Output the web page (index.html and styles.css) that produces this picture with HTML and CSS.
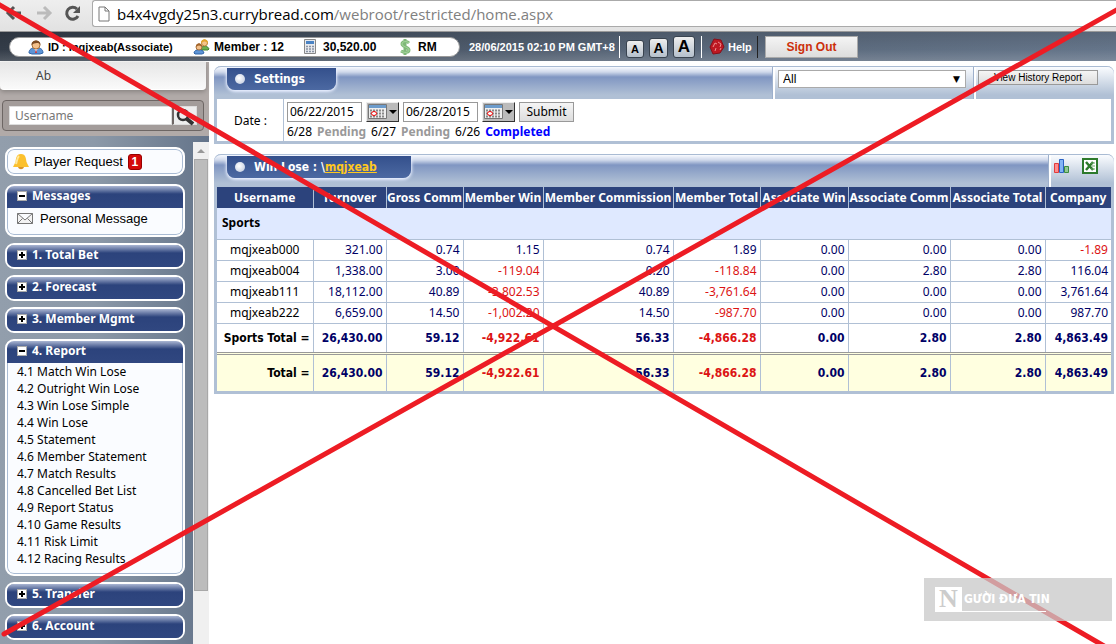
FILE: index.html
```html
<!DOCTYPE html>
<html lang="en">
<head>
<meta charset="utf-8">
<title>Win Lose</title>
<link rel="stylesheet" href="styles.css">
</head>
<body>
<div class="page">
  <div class="browser">
    <svg class="nav-icons" width="92" height="28" viewBox="0 0 92 28" fill="none">
      <path d="M21 13H8M14 7l-6 6 6 6" stroke="#555" stroke-width="3"/>
      <path d="M37 13h13M44 7l6 6-6 6" stroke="#bbb" stroke-width="3"/>
      <path d="M77 9a6 6 0 1 0 1 7" stroke="#555" stroke-width="3"/>
      <path d="M80 6v7h-7z" fill="#555"/>
    </svg>
    <div class="address">
      <svg width="12" height="16" viewBox="0 0 12 16"><path d="M1 1h6l4 4v10H1zM7 1v4h4" fill="#fff" stroke="#777"/></svg>
      <span>b4x4vgdy25n3.currybread.com<span class="path">/webroot/restricted/home.aspx</span></span>
    </div>
  </div>

  <header class="topbar">
    <div class="account">
      <span class="fact id">
        <svg width="16" height="16" viewBox="0 0 16 16"><path d="M1 14c0-4 3-5 5-5h4c2 0 5 1 5 5l-3 1H4z" fill="#5d94d6" stroke="#2f64a8"/><path d="M6 9l2 4 2-4z" fill="#fff"/><path d="M8 10l-1 4h2z" fill="#d33"/><circle cx="8" cy="6" r="4" fill="#f3c08a" stroke="#a8703a"/><path d="M3.500 6C3 0 13 0 12.500 6 11 3 6 4 3.500 6z" fill="#7a4a22"/></svg>
        ID : mqjxeab(Associate)</span>
      <span class="fact member">
        <svg width="17" height="16" viewBox="0 0 17 16"><path d="M8 9c0-2 7-3 8 1l-1 1H8z" fill="#6bb04c" stroke="#3f8130"/><circle cx="11.500" cy="4" r="3" fill="#f5c58b" stroke="#b98634"/><path d="M8 4c0-5 7-5 7 0-2-2-4-2-7 0z" fill="#e3a62c"/><path d="M1 14c0-4 9-5 10 0l-2 1H2z" fill="#5d94d6" stroke="#2f64a8"/><circle cx="6" cy="8" r="3" fill="#f3c08a" stroke="#a8703a"/><path d="M3 8c0-5 6-5 6 0-2-2-4-2-6 0z" fill="#a3662c"/></svg>
        Member : 12</span>
      <span class="fact credit">
        <svg width="12" height="15" viewBox="0 0 12 15"><path d="M.5.5h11v14H.5z" fill="#e8eaee" stroke="#888"/><path d="M2 2h8v3H2z" fill="#4a83c4"/><path d="M2 7.500h8M2 10h8M2 12.500h8" stroke="#8993a4" stroke-width="1.500" stroke-dasharray="2 1"/></svg>
        30,520.00</span>
      <span class="fact currency">
        <svg width="12" height="16" viewBox="0 0 12 16" fill="none"><path d="M10 4C8 2 3 2 3 5s7 3 7 6-5 3-8 1M6 0v16" stroke="#7fb878" stroke-width="3"/><path d="M10 4C8 2 3 2 3 5s7 3 7 6-5 3-8 1" stroke="#a9d8a0"/></svg>
        RM</span>
    </div>
    <time class="clock">28/06/2015 02:10 PM GMT+8</time>
    <div class="sizes">
      <button class="size small">A</button><button class="size medium">A</button><button class="size large">A</button>
    </div>
    <a class="help" href="#">
      <svg width="16" height="17" viewBox="0 0 16 17"><path d="M5 1l7 1 3 7-4 6-7 1-3-7z" fill="#bd1822" stroke="#85101a"/><path d="M4 9l2-4 2 1M9 4l3 2-1 3M6 13l1-3M11 12l1-2" fill="none" stroke="#ee8d8d"/></svg>
      Help</a>
    <button class="signout">Sign Out</button>
  </header>

  <div class="columns">
    <aside class="sidebar">
      <div class="finder">
        <div class="finder-tab">Ab</div>
        <form class="search">
          <input type="text" placeholder="Username" aria-label="Username">
          <button type="button" aria-label="Search"><svg width="20" height="20" viewBox="0 0 20 20" fill="none" stroke="#333"><circle cx="8" cy="8" r="5" stroke-width="2.500"/><path d="M12 12l6 5" stroke-width="4"/></svg></button>
        </form>
      </div>
      <div class="scroll-area">
        <nav class="menu">
          <a class="group request" href="#">
            <svg width="16" height="17" viewBox="0 0 16 17"><path d="M8 1c5 0 5 5 5.500 8L16 14H0l2.500-5C3 6 3 1 8 1z" fill="#fbc02d"/><path d="M6 3c-2 2-2 5-3 8" stroke="#ffe79a" stroke-width="2" fill="none"/><path d="M5 14h6c-1 3-5 3-6 0z" fill="#d8922a"/></svg>
            Player Request <span class="badge">1</span></a>
          <section class="group open">
            <h2><i class="toggle minus"></i>Messages</h2>
            <a class="mail" href="#"><svg width="16" height="11" viewBox="0 0 16 11" fill="#f3f3f3" stroke="#777"><path d="M.5.5h15v10H.5zM.5.5L8 7l7.500-6.500M.5 10.500l5-5M15.500 10.500l-5-5"/></svg>Personal Message</a>
          </section>
          <section class="group"><h2><i class="toggle"></i>1. Total Bet</h2></section>
          <section class="group"><h2><i class="toggle"></i>2. Forecast</h2></section>
          <section class="group"><h2><i class="toggle"></i>3. Member Mgmt</h2></section>
          <section class="group open">
            <h2><i class="toggle minus"></i>4. Report</h2>
            <ul>
              <li><a href="#">4.1 Match Win Lose</a></li>
              <li><a href="#">4.2 Outright Win Lose</a></li>
              <li><a href="#">4.3 Win Lose Simple</a></li>
              <li><a href="#">4.4 Win Lose</a></li>
              <li><a href="#">4.5 Statement</a></li>
              <li><a href="#">4.6 Member Statement</a></li>
              <li><a href="#">4.7 Match Results</a></li>
              <li><a href="#">4.8 Cancelled Bet List</a></li>
              <li><a href="#">4.9 Report Status</a></li>
              <li><a href="#">4.10 Game Results</a></li>
              <li><a href="#">4.11 Risk Limit</a></li>
              <li><a href="#">4.12 Racing Results</a></li>
            </ul>
          </section>
          <section class="group"><h2><i class="toggle"></i>5. Transfer</h2></section>
          <section class="group"><h2><i class="toggle"></i>6. Account</h2></section>
        </nav>
        <div class="scrollbar"><div class="arrow"></div><div class="thumb"></div></div>
      </div>
    </aside>

    <main class="content">
      <section class="panel">
        <div class="panel-head">
          <h1 class="tab"><i class="dot"></i>Settings</h1>
          <div class="tools filter"><select aria-label="Type"><option>All</option></select></div>
          <div class="tools history"><button>View History Report</button></div>
        </div>
        <form class="dates">
          <label class="dates-label" for="from">Date :</label>
          <div class="dates-body">
            <div class="dates-row">
              <input id="from" type="text" value="06/22/2015">
              <button class="calendar" type="button" aria-label="Pick start date"><svg width="30" height="18" viewBox="0 0 30 18"><path d="M1.500 1.500h18v14h-18z" fill="#eee" stroke="#777"/><path d="M2 2h17v3H2z" fill="#6c9ccc"/><path d="M3 7.500h15M3 10.500h15M3 13.500h15" stroke="#888" stroke-width="2" stroke-dasharray="2 1"/><ellipse cx="7" cy="10.500" rx="2.500" ry="2" fill="#fff" stroke="#e00"/><path d="M22 7h8l-4 4z"/></svg></button>
              <input type="text" value="06/28/2015" aria-label="End date">
              <button class="calendar" type="button" aria-label="Pick end date"><svg width="30" height="18" viewBox="0 0 30 18"><path d="M1.500 1.500h18v14h-18z" fill="#eee" stroke="#777"/><path d="M2 2h17v3H2z" fill="#6c9ccc"/><path d="M3 7.500h15M3 10.500h15M3 13.500h15" stroke="#888" stroke-width="2" stroke-dasharray="2 1"/><ellipse cx="7" cy="10.500" rx="2.500" ry="2" fill="#fff" stroke="#e00"/><path d="M22 7h8l-4 4z"/></svg></button>
              <button class="submit" type="button">Submit</button>
            </div>
            <div class="status"><span>6/28</span> <b class="pending">Pending</b> <span>6/27</span> <b class="pending">Pending</b> <span>6/26</span> <b class="done">Completed</b></div>
          </div>
        </form>
      </section>

      <section class="panel">
        <div class="panel-head">
          <h1 class="tab wide"><i class="dot"></i><span>Win Lose : \<a href="#">mqjxeab</a></span></h1>
          <div class="tools exports">
            <svg width="16" height="16" viewBox="0 0 16 16"><path d="M.5 5.500h4v9h-4z" fill="#ff8d8d" stroke="#e23b3b"/><path d="M5.500 1.500h4v13h-4z" fill="#82b4f5" stroke="#2b62c4"/><path d="M10.500 8.500h4v6h-4z" fill="#92c893" stroke="#3c8c40"/></svg>
            <svg width="16" height="16" viewBox="0 0 16 16"><path d="M1 1h14v14H1z" fill="#fff" stroke="#2d7a2b" stroke-width="2"/><path d="M4 4l7 8M11 4l-7 8" stroke="#2d7a2b" stroke-width="2.500"/><path d="M9 5h4M10 8h3M9 11h4" stroke="#69a567"/></svg>
          </div>
        </div>
        <table class="report">
          <colgroup><col class="w96"><col class="w73"><col class="w77"><col class="w80"><col class="w130"><col class="w87"><col class="w88"><col class="w102"><col class="w95"><col class="w66"></colgroup>
          <thead><tr><th>Username</th><th>Turnover</th><th>Gross Comm</th><th>Member Win</th><th>Member Commission</th><th>Member Total</th><th>Associate Win</th><th>Associate Comm</th><th>Associate Total</th><th>Company</th></tr></thead>
          <tbody>
            <tr class="sport"><td colspan="10">Sports</td></tr>
            <tr><td>mqjxeab000</td><td>321.00</td><td>0.74</td><td>1.15</td><td>0.74</td><td>1.89</td><td>0.00</td><td>0.00</td><td>0.00</td><td class="neg">-1.89</td></tr>
            <tr><td>mqjxeab004</td><td>1,338.00</td><td>3.00</td><td class="neg">-119.04</td><td>0.20</td><td class="neg">-118.84</td><td>0.00</td><td>2.80</td><td>2.80</td><td>116.04</td></tr>
            <tr><td>mqjxeab111</td><td>18,112.00</td><td>40.89</td><td class="neg">-3,802.53</td><td>40.89</td><td class="neg">-3,761.64</td><td>0.00</td><td>0.00</td><td>0.00</td><td>3,761.64</td></tr>
            <tr><td>mqjxeab222</td><td>6,659.00</td><td>14.50</td><td class="neg">-1,002.20</td><td>14.50</td><td class="neg">-987.70</td><td>0.00</td><td>0.00</td><td>0.00</td><td>987.70</td></tr>
            <tr class="subtotal"><td>Sports Total =</td><td>26,430.00</td><td>59.12</td><td class="neg">-4,922.61</td><td>56.33</td><td class="neg">-4,866.28</td><td>0.00</td><td>2.80</td><td>2.80</td><td>4,863.49</td></tr>
          </tbody>
          <tfoot><tr class="total"><td>Total =</td><td>26,430.00</td><td>59.12</td><td class="neg">-4,922.61</td><td>56.33</td><td class="neg">-4,866.28</td><td>0.00</td><td>2.80</td><td>2.80</td><td>4,863.49</td></tr></tfoot>
        </table>
      </section>
    </main>
  </div>

  <svg class="cross" viewBox="0 0 1116 644" preserveAspectRatio="none" stroke="#ed1c24" stroke-width="5" stroke-linecap="round"><path d="M-2 4L1104 646M4 634L1120 8"/></svg>
  <div class="watermark"><div class="brand"><span class="initial">N</span><span class="name">GƯỜI ĐƯA TIN</span></div></div>
</div>
</body>
</html>
```
FILE: styles.css
```css
* { box-sizing: border-box; }
body { margin: 0; background: #fff; color: #000; font: 12px/16px "Noto Sans", sans-serif; }
h1, h2, ul { margin: 0; padding: 0; font-size: 12px; }
ul { list-style: none; }
a { color: inherit; text-decoration: none; }
svg { flex: none; }
button, input, select { font: inherit; color: inherit; margin: 0; padding: 0; }
.page { position: relative; display: flex; flex-direction: column; min-height: 100vh; overflow: hidden; }

.browser { display: flex; height: 32px; padding-bottom: 4px; background: linear-gradient(#eee, #e2e2e2); border-bottom: 1px solid #999; }
.address { flex: 1; display: flex; align-items: center; gap: 7px; padding-left: 5px; height: 27px; background: #fff; border: 1px solid #aaa; border-right: 0; border-radius: 3px 0 0 3px; font: 15px/22px "Open Sans", sans-serif; white-space: nowrap; }
.path { color: #808080; }

.topbar { display: flex; align-items: center; height: 29px; padding-left: 9px; background: linear-gradient(rgba(0,0,0,.12), rgba(0,0,0,0) 60%, rgba(255,255,255,.15)), linear-gradient(90deg, #333c48, #566476 55%, #65758a); font-family: "Liberation Sans", sans-serif; font-weight: bold; color: #fff; white-space: nowrap; }
.account { display: flex; width: 451px; height: 20px; padding-left: 18px; background: #fff; border: 1px solid #999; border-radius: 10px; color: #000; }
.fact { display: flex; align-items: center; gap: 4px; }
.id { width: 165px; font-size: 11px; }
.member { width: 111px; }
.credit { width: 95px; gap: 7px; }
.currency { gap: 7px; }
.clock { width: 159px; padding-left: 9px; font-size: 11px; }
.sizes { display: flex; align-items: flex-end; gap: 5px; height: 22px; padding: 0 6px; border-left: 1px solid #fff; border-right: 1px solid #fff; }
.size { border: 1px solid #39434f; border-radius: 3px; background: linear-gradient(#eee, #b5c0cc); color: #000; font-weight: bold; }
.small { width: 18px; height: 18px; font-size: 11px; }
.medium { width: 19px; height: 20px; font-size: 14px; line-height: 18px; }
.large { width: 22px; height: 22px; font-size: 17px; line-height: 18px; }
.help { display: flex; align-items: center; gap: 3px; height: 22px; width: 56px; margin-right: 7px; padding-left: 7px; border-right: 1px solid #222; font-size: 11px; }
.signout { width: 93px; height: 22px; border: 1px solid #aaa; background: linear-gradient(#f4f4f4, #ddd); color: #cc2f0a; font-weight: bold; }

.columns { flex: 1; display: flex; padding-top: 1px; }
.sidebar { flex: none; width: 209px; display: flex; flex-direction: column; background: linear-gradient(90deg, #929eac, #8c99a8 45%, #64748a); }
.finder { height: 74px; background: #b1aaa8; }
.finder-tab { width: 206px; height: 28px; padding: 6px 36px; background: linear-gradient(#e6e6e6, #fafafa); border-bottom: 1px solid #fff; border-radius: 0 0 4px 4px; box-shadow: 0 2px 4px #8a8583; color: #444; }
.search { display: flex; width: 202px; margin: 10px 2px 0; padding: 5px 6px; height: 31px; background: #a39c9a; border: 1px solid #6d6664; border-radius: 4px; }
.search input { flex: 1; min-width: 0; padding-left: 5px; border: 1px solid #ddd; background: #fff; }
.search input::placeholder { color: #777; }
.search button { width: 25px; border: 1px solid #ddd; border-left: 2px solid #6d6664; background: #eee; display: flex; justify-content: center; }
.scroll-area { flex: 1; display: flex; justify-content: space-between; padding-top: 6px; }
.menu { width: 185px; padding: 5px 0 3px 5px; display: flex; flex-direction: column; gap: 6px; }
.group { background: #fafcff; border: 2px solid #fff; border-radius: 9px; overflow: hidden; display: block; }
.request { display: flex; align-items: center; gap: 5px; height: 29px; margin-bottom: 2px; padding-left: 6px; box-shadow: inset 0 0 0 1px #a9bbd3; }
.request, .mail { font-family: "Liberation Sans", sans-serif; font-size: 13px; }
.badge { width: 14px; height: 16px; background: #d40b0b; border: 1px solid #900; border-radius: 3px; color: #fff; font-size: 12px; font-weight: bold; line-height: 14px; text-align: center; }
.group h2 { display: flex; align-items: center; gap: 5px; height: 22px; padding: 0 10px 2px; background: linear-gradient(#aab6d3, #2c437c 8px, #304780); color: #fff; line-height: 20px; }
.toggle { width: 10px; height: 10px; border: 1px solid #aaa; background: linear-gradient(#000, #000) center / 6px 2px no-repeat, linear-gradient(#000, #000) center / 2px 6px no-repeat, #fff; }
.minus { background: linear-gradient(#000, #000) center / 6px 2px no-repeat, #fff; }
.mail { display: flex; align-items: center; gap: 7px; height: 27px; padding: 0 0 5px 9px; }
.mail, .open ul { border: 1px solid #a9bbd3; border-top: 0; border-radius: 0 0 7px 7px; }
.open ul { padding: 0 0 6px 9px; }
.open li { line-height: 17px; }
.scrollbar { width: 16px; background: #f0f0f0; }
.arrow { height: 17px; display: flex; align-items: center; justify-content: center; }
.arrow::before { content: ""; border: 4px solid transparent; border-top: 0; border-bottom-color: #999; }
.thumb { height: 86%; margin: 0 1px; background: #bcbcbc; border: 1px solid #a8a8a8; }

.content { flex: 1; min-width: 0; display: flex; flex-direction: column; gap: 10px; padding: 4px 2px 0 5px; }
.panel { border: 3px solid #b0c0d5; border-top: 0; border-radius: 7px 7px 0 0; background: #fff; }
.panel-head { display: flex; height: 33px; margin: 0 -3px; padding-left: 13px; border-top: 1px solid #a9bbd3; border-radius: 7px 7px 0 0; background: linear-gradient(#f8faff, #d0d9eb 5px, #8096c2 10px, #b0c0d5 28px); }
.tab { display: flex; align-items: center; gap: 9px; width: 109px; height: 22px; margin: 1px auto 0 0; padding-left: 8px; background: linear-gradient(#34508c, #4c69a2); border-radius: 0 0 8px 8px; box-shadow: 0 1px 3px 1px #e8efff; color: #fff; }
.tab { font-family: "DejaVu Sans Condensed", "Noto Sans", sans-serif; }
.tab a { color: #ffc81e; text-decoration: underline; }
.wide { width: 184px; }
.dot { width: 10px; height: 10px; border-radius: 5px; background: radial-gradient(circle at 4px 4px, #fff, #b9c5dc); }
.tools { display: flex; align-items: flex-start; border-left: 1px solid #9db0cc; box-shadow: inset 2px 0 #fff; background: linear-gradient(#fafcff, #b0c0d5 28px); }
.filter { position: relative; width: 201px; padding: 3px 0 0 5px; }
.filter select { width: 188px; height: 18px; padding: 0 4px; border: 1px solid #aaa; appearance: none; background: #fff; font-family: "Liberation Sans", sans-serif; }
.filter::after { content: "▼"; position: absolute; right: 13px; top: 4px; font: 9px/16px "DejaVu Sans", sans-serif; pointer-events: none; }
.history { width: 141px; padding: 3px 0 0 4px; border-radius: 0 7px 0 0; }
.history button { width: 120px; height: 15px; border: 1px solid #999; background: linear-gradient(#f5f5f5, #ddd); font: 10px/12px "Liberation Sans", sans-serif; white-space: nowrap; }
.exports { width: 66px; gap: 12px; padding: 3px 0 0 5px; border-radius: 0 7px 0 0; }

.dates { display: flex; }
.dates-label { width: 67px; padding: 14px 0 0 17px; border-right: 1px solid #b0c0d5; }
.dates-body { padding: 3px 3px 1px; }
.dates-row { display: flex; gap: 4px; height: 20px; }
.dates input { width: 75px; padding: 0 2px; border: 1px solid #999; }
.calendar { width: 33px; border: 1px solid #eee; border-right-color: #333; border-bottom-color: #333; background: #bbb; display: flex; align-items: center; }
.submit { width: 55px; border: 1px solid #999; background: linear-gradient(#f5f5f5, #ddd); }
.status { display: flex; gap: 5px; padding-top: 2px; }
.pending { color: #999; }
.done { color: #00f; }

.report { width: 100%; table-layout: fixed; border-collapse: collapse; white-space: nowrap; }
.w96 { width: 96px; } .w73 { width: 73px; } .w77 { width: 77px; } .w80 { width: 80px; } .w130 { width: 130px; }
.w87 { width: 87px; } .w88 { width: 88px; } .w102 { width: 102px; } .w95 { width: 95px; } .w66 { width: 66px; }
.report th { height: 21px; padding: 0; background: #2c437c; color: #fff; border-right: 1px solid #b0c0d5; }
.report td { height: 21px; padding: 0 3px; text-align: right; color: #006; border-right: 1px solid #b0c0d5; border-bottom: 1px solid #b0c0d5; }
.report th:last-child, .report td:last-child { border-right: 0; }
.report td:first-child { text-align: center; color: #000; }
.report .sport td { height: 31px; padding-left: 5px; background: #dfe9ff; font-weight: bold; text-align: left; }
.report .subtotal td, .report .total td { font-family: "DejaVu Sans Condensed", "Noto Sans", sans-serif; font-weight: bold; }
.report .subtotal td { height: 30px; border-bottom: 3px double #999; }
.report .total td { height: 38px; background: #ffffe0; border-bottom: 0; }
.report .subtotal td:first-child, .report .total td:first-child { text-align: right; }
.report td.neg { color: #dc1414; }

.cross { position: absolute; inset: 0; width: 100%; height: 100%; pointer-events: none; }
.watermark { position: absolute; right: 4px; bottom: 23px; width: 188px; height: 43px; padding: 9px 11px; background: rgba(200,200,200,.75); pointer-events: none; }
.brand { display: flex; width: 111px; height: 25px; border-bottom: 1px solid #fff; color: #fff; }
.initial { flex: none; width: 27px; background: #fff; color: #ccc; font: bold 26px/24px "Liberation Serif", serif; text-align: center; }
.name { padding-left: 2px; font: bold 12px/24px "Liberation Sans Narrow", "DejaVu Sans Condensed", sans-serif; white-space: nowrap; }
```
